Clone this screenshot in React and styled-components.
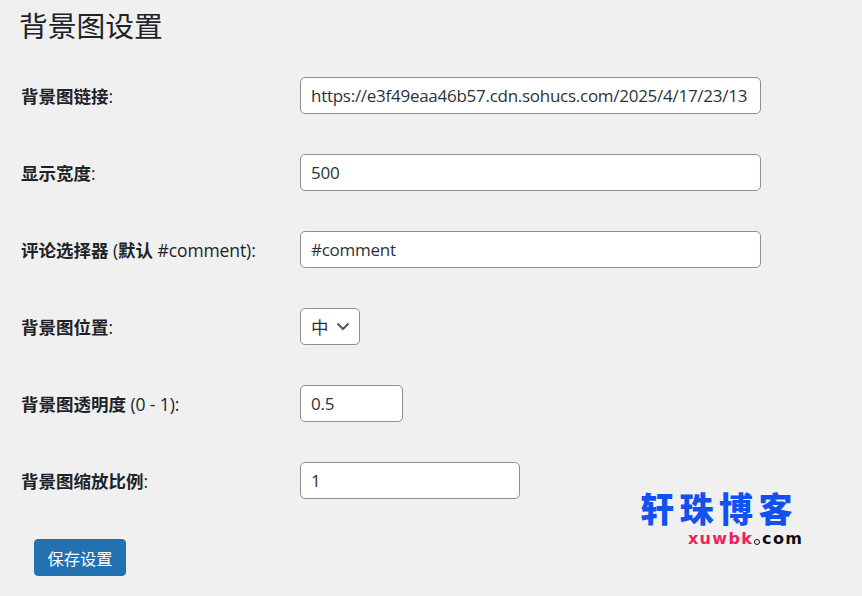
import React from "react";
import styled, { createGlobalStyle } from "styled-components";

const Global = createGlobalStyle`
  html, body { margin: 0; padding: 0; background: #f0f0f1; }
  body { width: 862px; height: 596px; overflow: hidden; }
`;
const CJK = `"Noto Sans CJK SC", sans-serif`;

const Page = styled.div`
  position: relative;
  width: 862px;
  height: 596px;
  box-sizing: border-box;
  padding: 8px 0 0 19px;
  background: #f0f0f1;
  color: #1d2327;
`;
const Title = styled.h1`
  margin: 0 0 15px;
  font: 400 28.75px/34px ${CJK};
  color: #1d2327;
`;
const Form = styled.form`
  display: flex;
  flex-direction: column;
  padding-left: 3px;
`;
const Row = styled.div`
  display: grid;
  grid-template-columns: 278px 1fr;
  align-items: center;
  height: 77px;
`;
const Label = styled.label`
  margin: 0 0 0 -1px;
  font: 700 17.5px/24px ${CJK};
  color: #1d2327;
  white-space: nowrap;
`;
const Latin = styled.span`
  font: 500 17.5px/24px "Open Sans", sans-serif;
  letter-spacing: -0.1px;
`;
const Input = styled.input`
  box-sizing: border-box;
  width: ${(p) => p.$w}px;
  height: 37px;
  padding: 0 10px;
  border: 1px solid #8c8f94;
  border-radius: 5px;
  background: #fff;
  color: #2c3338;
  font: 400 17px/24px "Open Sans", sans-serif;
  letter-spacing: -0.27px;
  outline: none;
`;
const SelectBox = styled.div`
  box-sizing: border-box;
  display: flex;
  align-items: center;
  gap: 7px;
  width: 60px;
  height: 37px;
  padding-left: 10px;
  border: 1px solid #8c8f94;
  border-radius: 5px;
  background: #fff;
  color: #2c3338;
  font: 400 17.5px/24px ${CJK};
`;
const Chevron = styled.svg`
  width: 14px;
  height: 9px;
  flex: none;
`;
const Save = styled.button`
  align-self: flex-start;
  box-sizing: border-box;
  width: 92px;
  height: 37px;
  margin: 20px 0 0 12px;
  padding: 0;
  border: 1px solid #2271b1;
  border-radius: 4px;
  background: #2271b1;
  color: #fff;
  font: 400 16.25px/24px ${CJK};
`;
const Logo = styled.div`
  position: absolute;
  left: 640px;
  top: 487px;
  width: 170px;
`;
const LogoCn = styled.div`
  height: 42px;
  color: #1251f0;
  font: 900 34px/42px ${CJK};
  letter-spacing: 5.5px;
  white-space: nowrap;
`;
const LogoEn = styled.div`
  display: flex;
  align-items: center;
  margin: 1px 0 0 48px;
  font: 900 16px/18px "DejaVu Sans", sans-serif;
  letter-spacing: 1.3px;
  color: #111;
  white-space: nowrap;
`;
const LogoPink = styled.span`
  color: #f01e5a;
`;
const LogoDot = styled.span`
  box-sizing: border-box;
  width: 6px;
  height: 6px;
  margin: 5px 2px 0 1px;
  border: 1.5px solid #111;
  border-radius: 50%;
`;

export default function App() {
  return (
    <Page>
      <Global />
      <Title>背景图设置</Title>
      <Form>
        <Row>
          <Label>背景图链接<Latin>:</Latin></Label>
          <Input $w={461} readOnly value="https://e3f49eaa46b57.cdn.sohucs.com/2025/4/17/23/13" />
        </Row>
        <Row>
          <Label>显示宽度<Latin>:</Latin></Label>
          <Input $w={461} readOnly value="500" />
        </Row>
        <Row>
          <Label>评论选择器<Latin> (</Latin>默认<Latin> #comment):</Latin></Label>
          <Input $w={461} readOnly value="#comment" />
        </Row>
        <Row>
          <Label>背景图位置<Latin>:</Latin></Label>
          <SelectBox>
            中
            <Chevron viewBox="0 0 14 9">
              <path d="M1.5 1.5 L7 7 L12.5 1.5" fill="none" stroke="#50575e" strokeWidth="2" />
            </Chevron>
          </SelectBox>
        </Row>
        <Row>
          <Label>背景图透明度<Latin> (0 - 1):</Latin></Label>
          <Input $w={103} readOnly value="0.5" />
        </Row>
        <Row>
          <Label>背景图缩放比例<Latin>:</Latin></Label>
          <Input $w={220} readOnly value="1" />
        </Row>
        <Save type="button">保存设置</Save>
      </Form>
      <Logo>
        <LogoCn>轩珠博客</LogoCn>
        <LogoEn><LogoPink>xuwbk</LogoPink><LogoDot />com</LogoEn>
      </Logo>
    </Page>
  );
}
